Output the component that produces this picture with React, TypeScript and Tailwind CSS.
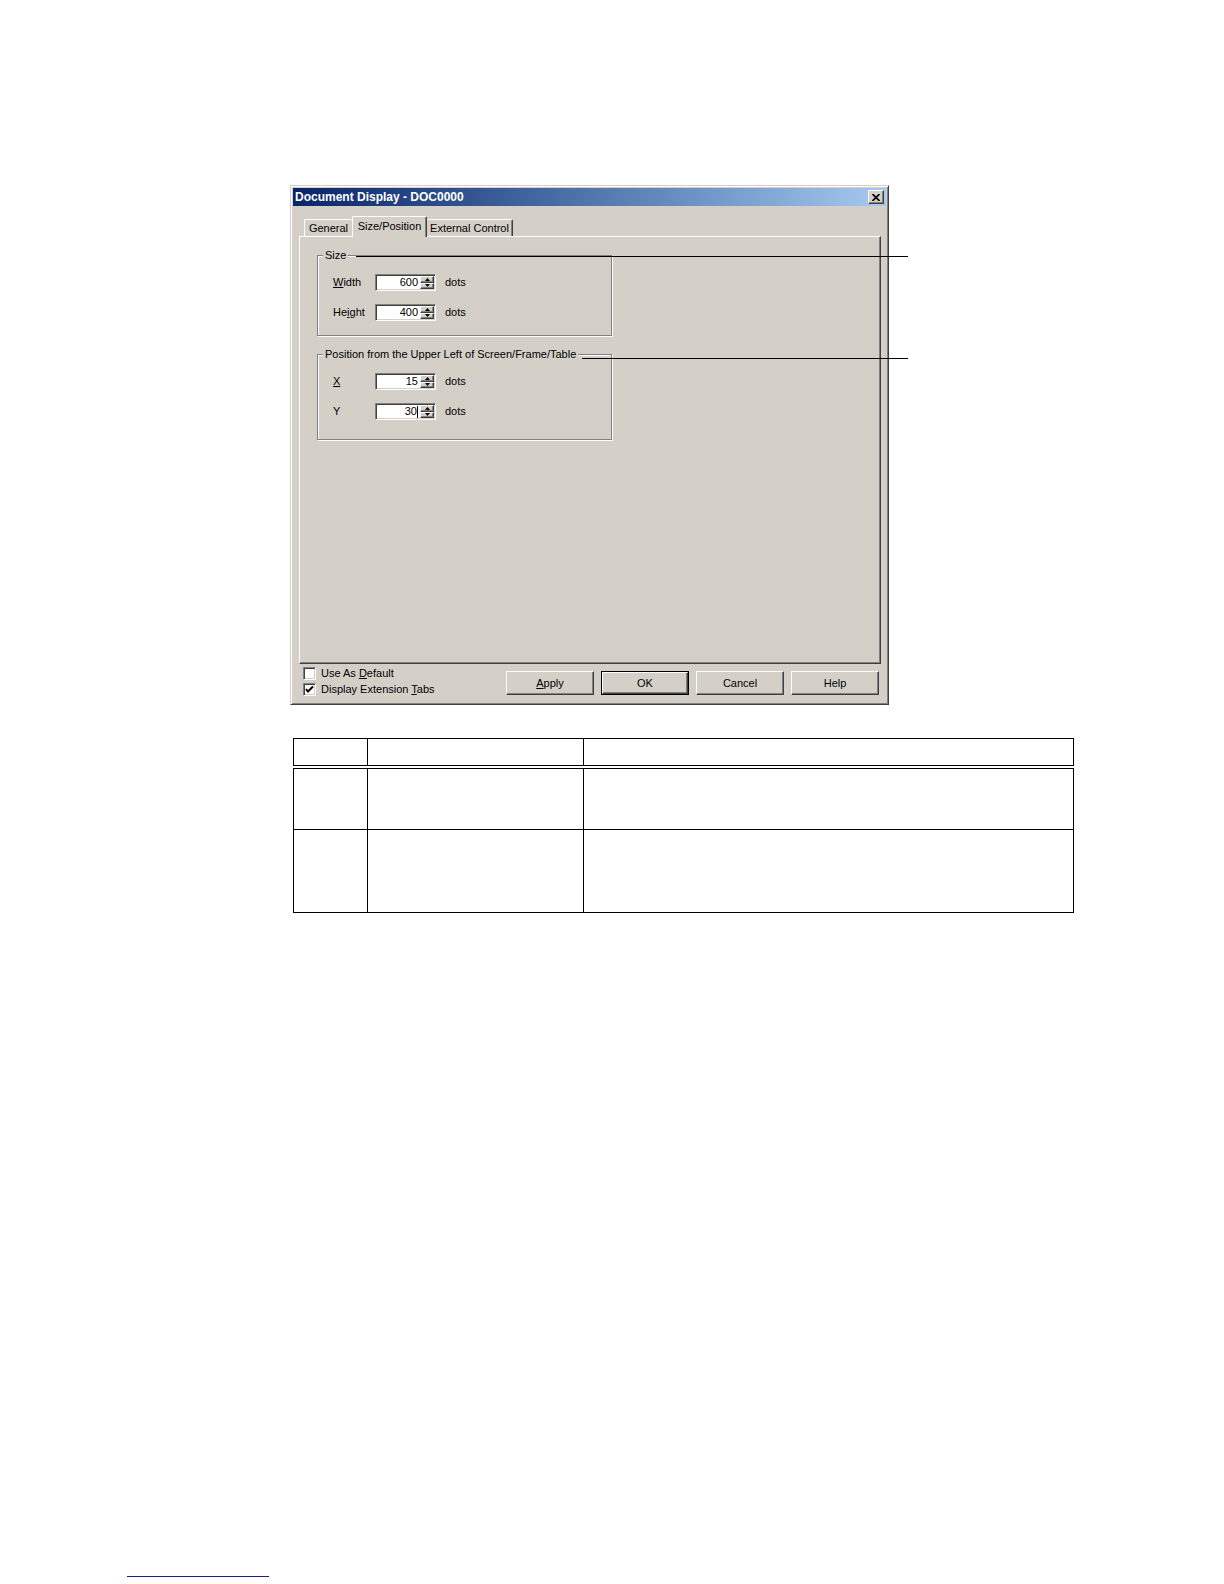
import React from "react";

const raised =
  "border border-t-white border-l-white border-r-[#404040] border-b-[#404040] shadow-[inset_-1px_-1px_0_#808080]";
const sunken =
  "border border-t-[#808080] border-l-[#808080] border-r-white border-b-white shadow-[inset_1px_1px_0_#404040,inset_-1px_-1px_0_#d4d0c8]";

function SpinBox({ value, caret }: { value: string; caret?: boolean }) {
  return (
    <div className={`flex h-[17px] w-[61px] bg-white ${sunken}`}>
      <div className="flex flex-1 items-center justify-end pr-[2px] text-[11px] leading-none">
        <span>{value}</span>
        {caret && <span className="h-[12px] w-px bg-black" />}
      </div>
      <div className="flex w-[15px] flex-col py-px pr-px">
        <div className={`flex flex-1 items-center justify-center bg-[#d4d0c8] ${raised}`}>
          <svg width="5" height="3" viewBox="0 0 5 3">
            <path d="M2.5 0 L5 3 L0 3 Z" fill="#000" />
          </svg>
        </div>
        <div className={`flex flex-1 items-center justify-center bg-[#d4d0c8] ${raised}`}>
          <svg width="5" height="3" viewBox="0 0 5 3">
            <path d="M0 0 L5 0 L2.5 3 Z" fill="#000" />
          </svg>
        </div>
      </div>
    </div>
  );
}

function FieldRow({ label, value, caret }: { label: React.ReactNode; value: string; caret?: boolean }) {
  return (
    <div className="flex h-[17px] items-center">
      <span className="w-[42px] text-[11px] leading-none">{label}</span>
      <SpinBox value={value} caret={caret} />
      <span className="ml-[9px] text-[11px] leading-none">dots</span>
    </div>
  );
}

function Group({ title, className, children }: { title: string; className: string; children: React.ReactNode }) {
  return (
    <div
      className={`relative w-[295px] border border-[#808080] shadow-[inset_1px_1px_0_white,1px_1px_0_white] pt-[18px] pl-[15px] ${className}`}
    >
      <span className="absolute -top-[7px] left-[5px] bg-[#d4d0c8] px-[2px] text-[11px] leading-[13px]">
        {title}
      </span>
      <div className="flex flex-col gap-[13px]">{children}</div>
    </div>
  );
}

function CheckBox({ checked, label }: { checked?: boolean; label: React.ReactNode }) {
  return (
    <div className="flex h-[13px] items-center gap-[5px]">
      <div className={`flex h-[13px] w-[13px] items-center justify-center bg-white ${sunken}`}>
        {checked && (
          <svg width="9" height="9" viewBox="0 0 9 9">
            <path d="M1 4 L3 6.5 L8 1.5" stroke="#000" strokeWidth="2" fill="none" />
          </svg>
        )}
      </div>
      <span className="text-[11px] leading-none">{label}</span>
    </div>
  );
}

function Btn({ children, isDefault }: { children: React.ReactNode; isDefault?: boolean }) {
  return (
    <div className={`h-[24px] w-[88px] ${isDefault ? "border border-black" : ""}`}>
      <div className={`flex h-full w-full items-center justify-center bg-[#d4d0c8] text-[11px] leading-none ${raised}`}>
        {children}
      </div>
    </div>
  );
}

const headCell = "border-[1.5px] border-black border-b-[4px] [border-bottom-style:double]";
const cell = "border-[1.5px] border-black";

export default function App() {
  return (
    <div className="relative h-[1584px] w-[1224px] overflow-hidden bg-white font-['Liberation_Sans',Arial,sans-serif] text-black">
      <div className="pt-[185px] pl-[290px]">
        {/* dialog */}
        <div className="flex h-[520px] w-[599px] flex-col border border-t-[#d4d0c8] border-l-[#d4d0c8] border-r-[#404040] border-b-[#404040] bg-[#d4d0c8] p-[2px] shadow-[inset_1px_1px_0_white,inset_-1px_-1px_0_#808080]">
          <div className="flex h-[18px] items-center justify-between bg-gradient-to-r from-[#0a246a] to-[#a6caf0] pl-[2px] pr-[2px]">
            <span className="text-[12px] font-bold leading-none text-white">Document Display - DOC0000</span>
            <div className={`flex h-[14px] w-[16px] items-center justify-center bg-[#d4d0c8] ${raised}`}>
              <svg width="8" height="7" viewBox="0 0 8 7">
                <path d="M0.5 0 L7.5 7 M7.5 0 L0.5 7" stroke="#000" strokeWidth="1.6" />
              </svg>
            </div>
          </div>

          <div className="mt-[10px] ml-[6px] mr-[5px]">
            {/* tabs */}
            <div className="flex h-[20px] items-end pl-[5px]">
              <div className="flex h-[17px] w-[48px] items-center justify-center rounded-t-[2px] border-l border-t border-l-white border-t-white text-[11px] leading-none">
                General
              </div>
              <div className="relative z-10 -mb-px flex h-[21px] w-[75px] items-start justify-center rounded-t-[2px] border-l border-t border-r border-l-white border-t-white border-r-[#404040] bg-[#d4d0c8] pt-[4px] text-[11px] leading-none shadow-[inset_-1px_0_0_#808080]">
                Size/Position
              </div>
              <div className="flex h-[17px] w-[86px] items-center justify-center rounded-t-[2px] border-t border-r border-t-white border-r-[#404040] text-[11px] leading-none shadow-[inset_-1px_0_0_#808080]">
                External Control
              </div>
            </div>

            {/* panel */}
            <div className="h-[428px] border border-t-white border-l-white border-r-[#404040] border-b-[#404040] pt-[18px] pl-[17px] shadow-[inset_-1px_-1px_0_#808080]">
              <Group title="Size" className="h-[81px]">
                <FieldRow label={<><u>W</u>idth</>} value="600" />
                <FieldRow label={<>He<u>i</u>ght</>} value="400" />
              </Group>
              <Group title="Position from the Upper Left of Screen/Frame/Table" className="mt-[18px] h-[86px]">
                <FieldRow label={<u>X</u>} value="15" />
                <FieldRow label="Y" value="30" caret />
              </Group>
            </div>

            {/* footer */}
            <div className="mt-[3px] flex items-start pl-[4px]">
              <div className="flex w-[203px] flex-col gap-[3px]">
                <CheckBox label={<>Use As <u>D</u>efault</>} />
                <CheckBox checked label={<>Display Extension <u>T</u>abs</>} />
              </div>
              <div className="mt-[4px] flex gap-[7px]">
                <Btn><u>A</u>pply</Btn>
                <Btn isDefault>OK</Btn>
                <Btn>Cancel</Btn>
                <Btn>Help</Btn>
              </div>
            </div>
          </div>
        </div>
      </div>

      {/* callout lines */}
      <div className="absolute left-[356px] top-[256px] h-px w-[552px] bg-black" />
      <div className="absolute left-[582px] top-[358px] h-px w-[326px] bg-black" />

      <table className="ml-[293px] mt-[33px] w-[780px] table-fixed border-collapse">
        <colgroup>
          <col className="w-[74px]" />
          <col className="w-[216px]" />
          <col className="w-[490px]" />
        </colgroup>
        <tbody>
          <tr className="h-[28px]">
            <td className={headCell} />
            <td className={headCell} />
            <td className={headCell} />
          </tr>
          <tr className="h-[63px]">
            <td className={cell} />
            <td className={cell} />
            <td className={cell} />
          </tr>
          <tr className="h-[83px]">
            <td className={cell} />
            <td className={cell} />
            <td className={cell} />
          </tr>
        </tbody>
      </table>

      <div className="ml-[127px] mt-[663px] h-px w-[142px] bg-[#1a1f8f]" />
    </div>
  );
}
